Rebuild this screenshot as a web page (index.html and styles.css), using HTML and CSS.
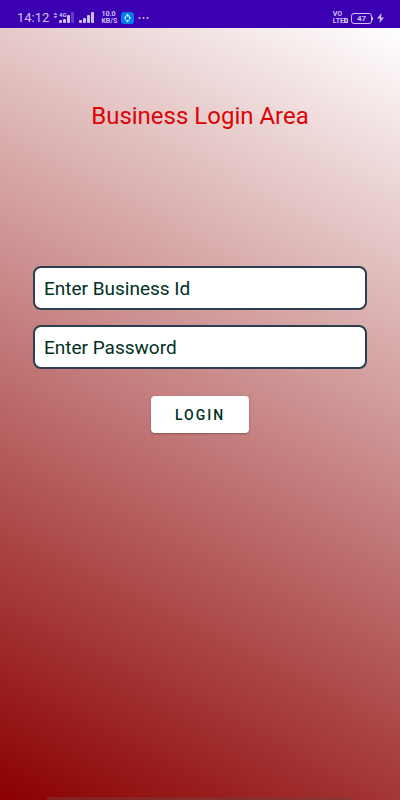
FILE: index.html
```html
<!DOCTYPE html>
<html lang="en">
<head>
<meta charset="utf-8">
<meta name="viewport" content="width=device-width, initial-scale=1">
<title>Business Login Area</title>
<link rel="stylesheet" href="styles.css">
</head>
<body>
<header class="status">
  <div class="status-group">
    <span class="clock">14:12</span>
    <svg class="signals" width="44" height="14" viewBox="0 0 44 14" aria-hidden="true">
      <path d="M0.5 4 2.5 1.5 4.5 4ZM0.5 5 2.5 7.5 4.5 5Z" opacity=".8"/>
      <text x="6" y="6">4G</text>
      <rect x="6" y="9" width="3" height="3" rx="1"/>
      <rect x="10" y="8" width="3" height="4" rx="1"/>
      <rect x="14" y="4" width="3" height="8" rx="1"/>
      <rect x="18" y="1" width="3" height="11" rx="1" opacity=".3"/>
      <rect x="26" y="9" width="3" height="3" rx="1"/>
      <rect x="30" y="7" width="3" height="5" rx="1"/>
      <rect x="34" y="4" width="3" height="8" rx="1"/>
      <rect x="38" y="1" width="3" height="11" rx="1"/>
    </svg>
    <span class="stack"><span>10.0</span><span>KB/S</span></span>
    <svg class="app" width="13" height="12" viewBox="0 0 13 12" aria-hidden="true">
      <rect width="13" height="12" rx="3" fill="#0878ee"/>
      <path d="M6.500 1.500 9 4.500H4ZM6.500 10.500 4.500 8H8.500ZM3 6 5 4V8ZM10 6 8 8V4Z" fill="#b9f5ff"/>
      <circle cx="6.500" cy="6" r="1" fill="#0878ee"/>
    </svg>
    <svg width="11" height="4" viewBox="0 0 11 4" aria-hidden="true">
      <circle cx="1.500" cy="2" r="1"/><circle cx="5.500" cy="2" r="1"/><circle cx="9.500" cy="2" r="1"/>
    </svg>
  </div>
  <div class="status-group status-right">
    <span class="stack"><span>VO</span><span>LTE<svg class="sim" width="4" height="5" viewBox="0 0 4 5" aria-hidden="true"><path fill-rule="evenodd" d="M0 0H3L4 1V5H0ZM1.500 1V4H2.500V1Z"/></svg></span></span>
    <span class="battery">47</span>
    <svg width="7" height="10" viewBox="0 0 7 10" aria-hidden="true">
      <path d="M4.500 0 0 5.500H3L2.500 10 7 4.500H4Z"/>
    </svg>
  </div>
</header>
<main class="screen">
  <h1 class="title">Business Login Area</h1>
  <form class="form">
    <input class="field" type="text" placeholder="Enter Business Id" aria-label="Enter Business Id">
    <input class="field" type="password" placeholder="Enter Password" aria-label="Enter Password">
    <button class="login" type="button">LOGIN</button>
  </form>
  <div class="edge"></div>
</main>
</body>
</html>
```
FILE: styles.css
```css
* {
  box-sizing: border-box;
}

body {
  margin: 0;
  min-height: 100vh;
  display: flex;
  flex-direction: column;
  font-family: Roboto, "Liberation Sans", sans-serif;
}

.status {
  height: 28px;
  padding: 8px 16px 0;
  display: flex;
  justify-content: space-between;
  background: #3a00b2;
  color: #cfc0f2;
}

.status-group {
  height: 20px;
  display: flex;
  align-items: center;
  gap: 4px;
}

.status-right {
  gap: 3px;
}

.status svg {
  fill: currentColor;
}

.clock {
  padding-left: 1px;
  font-size: 13px;
  line-height: 20px;
}

.signals text {
  font-size: 6px;
  font-weight: 700;
}

.stack {
  display: flex;
  flex-direction: column;
  font-size: 7px;
  font-weight: 700;
  line-height: 7px;
}

.battery {
  position: relative;
  width: 21px;
  height: 11px;
  margin-right: 2px;
  border: 1px solid #cfc0f2;
  border-radius: 3px;
  font-size: 8px;
  font-weight: 700;
  line-height: 9px;
  text-align: center;
}

.battery::after {
  content: "";
  position: absolute;
  top: 3px;
  right: -2px;
  width: 1px;
  height: 3px;
  background: #cfc0f2;
}

.screen {
  flex: 1;
  display: flex;
  flex-direction: column;
  padding: 72px 33px 0;
  background: linear-gradient(27deg, #8b0000, #ffffff);
}

.title {
  margin: 0;
  font-size: 24px;
  font-weight: 400;
  line-height: 32px;
  text-align: center;
  color: #dc0505;
}

.form {
  margin-top: 134px;
  display: flex;
  flex-direction: column;
  gap: 15px;
}

.field {
  width: 100%;
  height: 44px;
  padding: 0 9px;
  border: 2px solid #2d3e50;
  border-radius: 8px;
  background: #ffffff;
  font: 400 19px Roboto, "Liberation Sans", sans-serif;
  color: #00301f;
}

.field::placeholder {
  color: #00301f;
  opacity: 1;
}

.login {
  align-self: center;
  height: 37px;
  margin-top: 12px;
  padding: 0 24px;
  border: 0;
  border-radius: 4px;
  background: #ffffff;
  box-shadow: 0 1px 2px rgba(0, 0, 0, 0.3);
  font: 500 14px Roboto, "Liberation Sans", sans-serif;
  letter-spacing: 2px;
  color: #00301f;
}

.edge {
  height: 3px;
  margin: auto 16px 0 14px;
  background: rgba(120, 60, 60, 0.5);
}
```
